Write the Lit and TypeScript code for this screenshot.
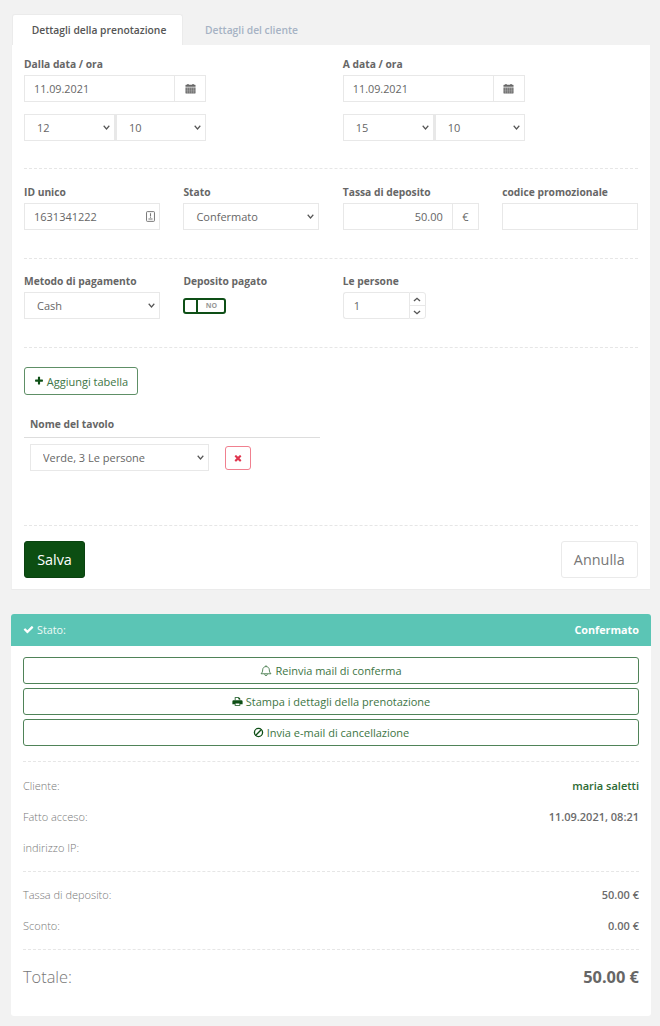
import { LitElement, html, css } from "lit";
import { customElement } from "lit/decorators.js";

const fa = (d: string, cls = "ico") => html`<svg class=${cls} viewBox="0 0 1792 1792" aria-hidden="true"><path fill="currentColor" d=${d}></path></svg>`;
const CHECK = "M1671 566q0 40-28 68l-724 724-136 136q-28 28-68 28t-68-28l-136-136-362-362q-28-28-28-68t28-68l136-136q28-28 68-28t68 28l294 295 656-657q28-28 68-28t68 28l136 136q28 28 28 68z";
const PLUS = "M1600 736v192q0 40-28 68t-68 28h-416v416q0 40-28 68t-68 28h-192q-40 0-68-28t-28-68v-416h-416q-40 0-68-28t-28-68v-192q0-40 28-68t68-28h416v-416q0-40 28-68t68-28h192q40 0 68 28t28 68v416h416q40 0 68 28t28 68z";
const TIMES = "M1490 1322q0 40-28 68l-136 136q-28 28-68 28t-68-28l-294-294-294 294q-28 28-68 28t-68-28l-136-136q-28-28-28-68t28-68l294-294-294-294q-28-28-28-68t28-68l136-136q28-28 68-28t68 28l294 294 294-294q28-28 68-28t68 28l136 136q28 28 28 68t-28 68l-294 294 294 294q28 28 28 68z";

const calendar = html`<svg class="ico cal" viewBox="0 0 12 12" aria-hidden="true">
  <path fill="currentColor" d="M1 2h1.500V1h1.500v1h4V1h1.500v1H11a.5.5 0 0 1 .5.5V4H.5V2.500A.5.5 0 0 1 1 2z"></path>
  <path fill="currentColor" d="M.5 4.800h11V11a.5.5 0 0 1-.5.5H1a.5.5 0 0 1-.5-.5z"></path>
  <path stroke="#fff" stroke-width=".25" d="M.5 6.400h11M.5 8h11M.5 9.700h11M2.800 4.800v6.700M5 4.800v6.700M7.200 4.800v6.700M9.400 4.800v6.700"></path>
</svg>`;
const idIcon = html`<svg class="ico idi" viewBox="0 0 10 12" aria-hidden="true">
  <rect x=".6" y=".6" width="8.800" height="10.800" rx=".8" fill="none" stroke="currentColor" stroke-width="1.100"></rect>
  <path fill="currentColor" d="M4.400 2.500h1.200v3.200H4.400zM4.400 6.300h1.200v1H4.400zM2.700 8.200h4.600v1H2.700z"></path>
</svg>`;
const bell = html`<svg class="ico bell" viewBox="0 0 14 14" aria-hidden="true">
  <path fill="none" stroke="currentColor" stroke-width="1" stroke-linejoin="round" d="M1.200 10.800c1.300-1.200 1.900-2.500 1.900-4.500C3.100 4 4.900 2.400 7 2.400s3.900 1.600 3.900 3.900c0 2 .6 3.300 1.900 4.500z"></path>
  <path fill="none" stroke="currentColor" stroke-width="1" d="M5.400 11.300c.1 1 .8 1.700 1.600 1.700s1.500-.7 1.600-1.700M7 .9v1.500"></path>
</svg>`;
const printer = html`<svg class="ico" viewBox="0 0 14 14" aria-hidden="true">
  <path fill="currentColor" d="M3.500 1.500h5.300L10.500 3.200v2.300h-1V4H8V2.500H4.500v3h-1z"></path>
  <path fill="currentColor" fill-rule="evenodd" d="M2 5.500h10a1.500 1.500 0 0 1 1.500 1.500v3.500h-3v2h-7v-2h-3V7A1.500 1.500 0 0 1 2 5.500zm2.500 4v2h5v-2z"></path>
</svg>`;
const ban = html`<svg class="ico" viewBox="0 0 14 14" aria-hidden="true">
  <circle cx="7" cy="7" r="5.200" fill="none" stroke="currentColor" stroke-width="1.700"></circle>
  <path stroke="currentColor" stroke-width="1.700" d="M3.300 10.700 10.700 3.300"></path>
</svg>`;
const chevUp = html`<svg class="chev" viewBox="0 0 10 6" aria-hidden="true"><path fill="none" stroke="currentColor" stroke-width="1.700" d="M1.200 5 5 1.500 8.800 5"></path></svg>`;
const chevDown = html`<svg class="chev" viewBox="0 0 10 6" aria-hidden="true"><path fill="none" stroke="currentColor" stroke-width="1.700" d="M1.200 1 5 4.500 8.800 1"></path></svg>`;

@customElement("app-root")
export class AppRoot extends LitElement {
  static styles = css`
    :host { display: block; width: 660px; min-height: 1026px; background: #f2f2f2; font-family: "Open Sans", sans-serif; font-size: 11px; color: #666; box-sizing: border-box; padding: 14px 9px 10px 11px; }
    * { box-sizing: border-box; }
    .tabs { display: flex; height: 31px; padding-left: 1px; }
    .tab { display: flex; align-items: center; justify-content: center; height: 31px; font-weight: 600; font-size: 10.300px; color: #a6b2c4; }
    .tab.active { width: 171px; padding-left: 3px; background: #fff; color: #555; border: 1px solid #ebebeb; border-bottom: 0; border-radius: 3px 3px 0 0; }
    .tab.plain { width: 137px; }
    .card { background: #fff; border-bottom: 1px solid #ebebeb; border-left: 1px solid #f0f0f0; }
    .form { width: 639px; padding: 0 12px; height: 545px; display: flex; flex-direction: column; }
    .section { border-bottom: 1px dashed #e6e6e6; padding-top: 16px; padding-bottom: 28px; }
    .section.first { padding-top: 12px; padding-bottom: 27px; }
    .section.third { padding-top: 15px; }
    .grid { display: grid; grid-template-columns: repeat(4, 136px); column-gap: 23.400px; }
    .half { grid-column: span 2; }
    label, .lbl { display: block; height: 14px; line-height: 14px; margin-bottom: 4px; font-size: 10.250px; font-weight: 700; color: #666; white-space: nowrap; }
    input, select { font-family: inherit; font-size: 11px; color: #666; background-color: #fff; border: 1px solid #e8e8e8; height: 27px; border-radius: 0; outline: 0; width: 100%; margin: 0; }
    input { padding: 0 9px; }
    select {
      appearance: none; -webkit-appearance: none; padding: 0 16px 0 12px;
      background-image: url("data:image/svg+xml,%3Csvg xmlns='http://www.w3.org/2000/svg' viewBox='0 0 8 5'%3E%3Cpath fill='none' stroke='%23555' stroke-width='1.400' d='M.8.8 4 4 7.200.8'/%3E%3C/svg%3E");
      background-repeat: no-repeat; background-size: 7px 4.500px; background-position: right 4px center;
    }
    .group { display: flex; width: 182px; }
    .group input { flex: 1; min-width: 0; font-size: 10.800px; }
    .addon { display: flex; align-items: center; justify-content: center; border: 1px solid #e8e8e8; border-left: 0; height: 27px; flex: none; background: #fff; color: #666; }
    .addon.wide { width: 31px; }
    .addon.euro { width: 26px; }
    .time { display: flex; width: 182px; margin-top: 12px; }
    .time select { width: 91px; }
    .time select + select { border-left-width: 2px; }
    .money { display: flex; }
    .money input { flex: 1; min-width: 0; text-align: right; }
    .idbox { position: relative; }
    .idbox .ico { position: absolute; right: 5px; top: 8px; color: #777; }
    .ico { width: 12px; height: 12px; display: inline-block; flex: none; }
    .cal { width: 11px; height: 11px; }
    .idi { width: 9px; height: 11px; }
    .toggle { display: flex; width: 43px; height: 16px; border: 2px solid #0e4f16; border-radius: 3px; margin-top: 10px; }
    .knob { width: 13px; border-right: 2px solid #0e4f16; }
    .off { flex: 1; text-align: center; font-size: 7px; font-weight: 700; line-height: 12px; color: #999; }
    .spin { display: flex; width: 83px; }
    .spin input { flex: 1; min-width: 0; border-right: 0; border-radius: 3px 0 0 3px; padding-left: 10px; }
    .arrows { width: 17px; flex: none; display: flex; flex-direction: column; border: 1px solid #e8e8e8; border-radius: 0 3px 3px 0; color: #555; }
    .arrows span { flex: 1; display: flex; align-items: center; justify-content: center; }
    .arrows span + span { border-top: 1px solid #e8e8e8; }
    .chev { width: 8px; height: 5px; }
    .tables { flex: 1; padding-top: 19px; border-bottom: 1px dashed #e6e6e6; }
    .btn-add { display: inline-flex; align-items: center; gap: 3px; height: 28px; width: 114px; justify-content: center; border: 1px solid #5e8f66; border-radius: 3px; background: #fff; color: #3d7544; font: inherit; font-size: 11px; padding: 0; }
    .btn-add .ico { width: 10px; height: 10px; color: #0e4f16; }
    .tbl { width: 296px; margin-top: 22px; }
    .tbl-h { height: 21px; line-height: 14px; padding-left: 6px; font-size: 10.250px; font-weight: 700; border-bottom: 1px solid #ddd; }
    .tbl-r { display: flex; align-items: center; gap: 16px; padding: 6px 0 0 6px; }
    .tbl-r select { width: 179px; }
    .btn-del { width: 26px; height: 24px; display: flex; align-items: center; justify-content: center; background: #fff; border: 1px solid #f0808f; border-radius: 3px; color: #e0364f; padding: 0; }
    .btn-del .ico { width: 10px; height: 10px; }
    .actions { display: flex; justify-content: space-between; height: 63px; padding-top: 15px; }
    .save { width: 61px; height: 37px; background: #0c4e12; color: #fff; border: 1px solid #0a4210; border-radius: 3px; font: inherit; font-size: 14.400px; padding: 0; }
    .cancel { width: 77.500px; height: 37px; background: #fff; color: #777; border: 1px solid #eaeaea; border-radius: 3px; font: inherit; font-size: 14.400px; padding: 0; }
    .card2 { margin-top: 24px; width: 640px; background: #fff; border-radius: 3px; height: 402px; }
    .head { height: 32px; display: flex; align-items: center; justify-content: space-between; padding: 0 12px; background: #5bc5b5; color: #fff; border-radius: 3px 3px 0 0; }
    .head .st { display: flex; align-items: center; gap: 3px; color: #eefaf7; font-size: 10.800px; line-height: 30px; margin-bottom: 1px; }
    .head .ico { width: 11px; height: 11px; color: #fff; }
    .head b { font-weight: 700; font-size: 10.800px; margin-bottom: 1px; }
    .body { padding: 11px 12px 0; }
    .wide-btns { display: flex; flex-direction: column; gap: 4px; }
    .wbtn { height: 27px; width: 616px; display: flex; align-items: center; justify-content: center; gap: 3px; background: #fff; border: 1px solid #4f8358; border-radius: 3px; color: #3d7544; font: inherit; font-size: 11px; padding: 0; }
    .wbtn .ico { color: #0e4f16; width: 11px; height: 11px; }
    .wbtn .ico.bell { color: #3d7544; width: 12px; height: 13px; }
    .block { border-top: 1px dashed #e6e6e6; padding: 8px 0; }
    .block.one { margin-top: 15px; }
    .block.two { padding-top: 7px; }
    .row { display: flex; justify-content: space-between; height: 31px; align-items: center; width: 616px; color: #777; font-weight: 300; }
    .row span + span { font-weight: 600; color: #6b6b6b; }
    .row .green { color: #2c6a33; }
    .total { display: flex; justify-content: space-between; align-items: center; width: 616px; border-top: 1px dashed #e6e6e6; height: 54px; font-size: 16.400px; font-weight: 300; color: #777; }
    .total b { font-weight: 700; color: #666; }
  `;

  private times(h: string, m: string) {
    return html`<div class="time"><select><option>${h}</option></select><select><option>${m}</option></select></div>`;
  }

  private dateCol(title: string, h: string, m: string) {
    return html`<div class="half">
      <label>${title}</label>
      <div class="group"><input .value=${"11.09.2021"} /><span class="addon wide">${calendar}</span></div>
      ${this.times(h, m)}
    </div>`;
  }

  render() {
    return html`
      <div class="tabs">
        <div class="tab active">Dettagli della prenotazione</div>
        <div class="tab plain">Dettagli del cliente</div>
      </div>
      <div class="card form">
        <div class="section first grid">
          ${this.dateCol("Dalla data / ora", "12", "10")}
          ${this.dateCol("A data / ora", "15", "10")}
        </div>
        <div class="section grid">
          <div><label>ID unico</label><div class="idbox"><input .value=${"1631341222"} />${idIcon}</div></div>
          <div><label>Stato</label><select><option>Confermato</option></select></div>
          <div><label>Tassa di deposito</label><div class="money"><input .value=${"50.00"} /><span class="addon euro">€</span></div></div>
          <div><label>codice promozionale</label><input /></div>
        </div>
        <div class="section third grid">
          <div><label>Metodo di pagamento</label><select><option>Cash</option></select></div>
          <div><span class="lbl">Deposito pagato</span><div class="toggle"><span class="knob"></span><span class="off">NO</span></div></div>
          <div><label>Le persone</label><div class="spin"><input .value=${"1"} /><div class="arrows"><span>${chevUp}</span><span>${chevDown}</span></div></div></div>
        </div>
        <div class="tables">
          <button class="btn-add">${fa(PLUS)}Aggiungi tabella</button>
          <div class="tbl">
            <div class="tbl-h">Nome del tavolo</div>
            <div class="tbl-r">
              <select><option>Verde, 3 Le persone</option></select>
              <button class="btn-del">${fa(TIMES)}</button>
            </div>
          </div>
        </div>
        <div class="actions">
          <button class="save">Salva</button>
          <button class="cancel">Annulla</button>
        </div>
      </div>
      <div class="card2">
        <div class="head"><span class="st">${fa(CHECK)}Stato:</span><b>Confermato</b></div>
        <div class="body">
          <div class="wide-btns">
            <button class="wbtn">${bell}Reinvia mail di conferma</button>
            <button class="wbtn">${printer}Stampa i dettagli della prenotazione</button>
            <button class="wbtn">${ban}Invia e-mail di cancellazione</button>
          </div>
          <div class="block one">
            <div class="row"><span>Cliente:</span><span class="green">maria saletti</span></div>
            <div class="row"><span>Fatto acceso:</span><span>11.09.2021, 08:21</span></div>
            <div class="row"><span>indirizzo IP:</span><span></span></div>
          </div>
          <div class="block two">
            <div class="row"><span>Tassa di deposito:</span><span>50.00 €</span></div>
            <div class="row"><span>Sconto:</span><span>0.00 €</span></div>
          </div>
          <div class="total"><span>Totale:</span><b>50.00 €</b></div>
        </div>
      </div>
    `;
  }
}
